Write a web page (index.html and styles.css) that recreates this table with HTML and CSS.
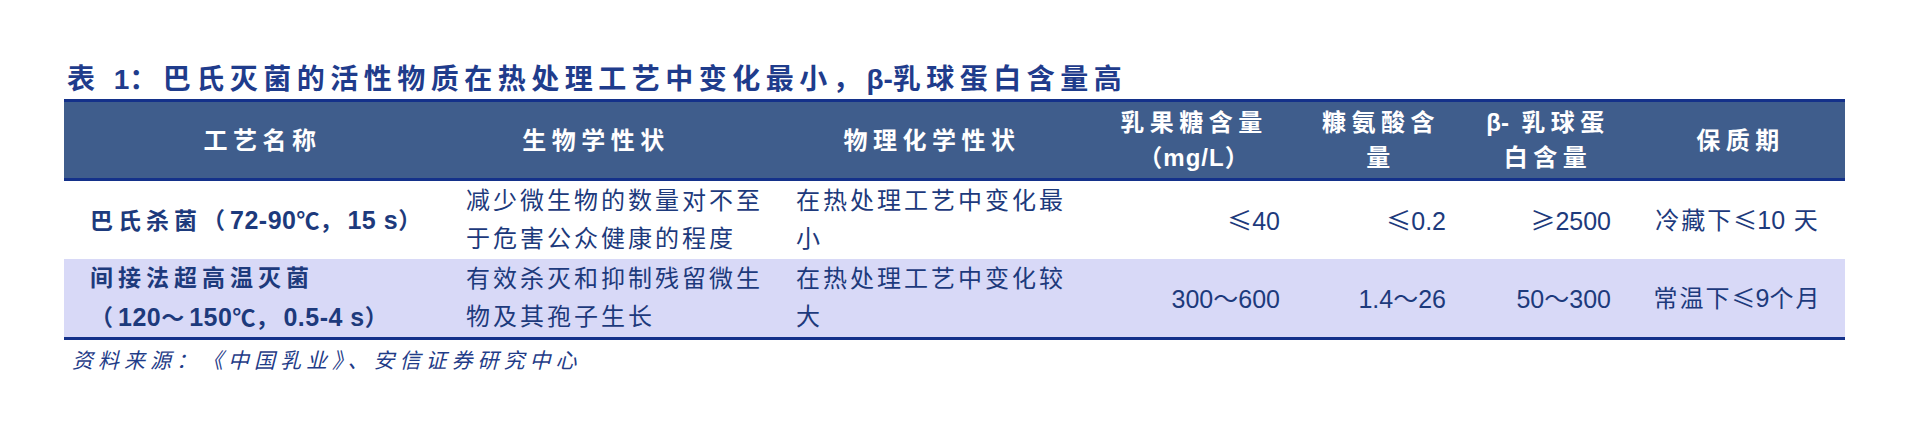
FILE: index.html
```html
<!DOCTYPE html>
<html lang="zh-CN">
<head>
<meta charset="utf-8">
<title>表1</title>
<link rel="stylesheet" href="styles.css">
</head>
<body>
<div class="page">
  <h1 class="title">表 <span class="n">1</span>：巴氏灭菌的活性物质在热处理工艺中变化最小，<span class="n">β-</span>乳球蛋白含量高</h1>
  <table class="data">
    <colgroup>
      <col class="c1"><col class="c2"><col class="c3"><col class="c4"><col class="c5"><col class="c6"><col class="c7">
    </colgroup>
    <thead>
      <tr>
        <th class="h1">工艺名称</th>
        <th class="h2">生物学性状</th>
        <th class="h3">物理化学性状</th>
        <th class="h4">乳果糖含量<br><span class="unit">（mg/L）</span></th>
        <th class="h5">糠氨酸含<br>量</th>
        <th class="h6"><span class="n">β-</span> 乳球蛋<br>白含量</th>
        <th class="h7">保质期</th>
      </tr>
    </thead>
    <tbody>
      <tr class="r1">
        <td class="name">巴氏杀菌（<span class="n">72-90</span><span class="sym">℃</span>，<span class="n">15 s</span>）</td>
        <td class="text">减少微生物的数量对不至<br>于危害公众健康的程度</td>
        <td class="text">在热处理工艺中变化最<br>小</td>
        <td class="num p4"><span class="sym">≤</span>40</td>
        <td class="num p5"><span class="sym">≤</span>0.2</td>
        <td class="num p6"><span class="sym">≥</span>2500</td>
        <td class="life">冷藏下<span class="sym">≤</span><span class="n">10</span> 天</td>
      </tr>
      <tr class="r2">
        <td class="name">间接法超高温灭菌<br>（<span class="n">120</span>～<span class="n">150</span><span class="sym">℃</span>，<span class="n">0.5-4 s</span>）</td>
        <td class="text">有效杀灭和抑制残留微生<br>物及其孢子生长</td>
        <td class="text">在热处理工艺中变化较<br>大</td>
        <td class="num p4">300<span class="sym">～</span>600</td>
        <td class="num p5">1.4<span class="sym">～</span>26</td>
        <td class="num p6">50<span class="sym">～</span>300</td>
        <td class="life">常温下<span class="sym">≤</span><span class="n">9</span>个月</td>
      </tr>
    </tbody>
  </table>
  <p class="source">资料来源：《中国乳业》、安信证券研究中心</p>
</div>
</body>
</html>
```
FILE: styles.css
```css
html, body {
  margin: 0;
  padding: 0;
  background: #ffffff;
}

body {
  font-family: "Liberation Sans", "Noto Sans CJK SC", sans-serif;
  color: #1d3a7c;
}

.page {
  padding: 61px 0 0 64px;
}

.title {
  margin: 0 0 1px 3px;
  font-size: 28px;
  line-height: 37px;
  font-weight: bold;
  letter-spacing: 5.5px;
  color: #1f3c8c;
  white-space: nowrap;
}

.n {
  font-family: "Liberation Sans", sans-serif;
  letter-spacing: 0;
}

.sym {
  font-family: "Noto Sans CJK SC", sans-serif;
  letter-spacing: 0;
}

.data {
  width: 1781px;
  table-layout: fixed;
  border-collapse: separate;
  border-spacing: 0;
}

.c1 { width: 391px; }
.c2 { width: 330px; }
.c3 { width: 315px; }
.c4 { width: 190px; }
.c5 { width: 170px; }
.c6 { width: 170px; }
.c7 { width: 215px; }

.data th {
  height: 76px;
  padding: 0 0 0 6px;
  background: #3f5d8c;
  color: #ffffff;
  font-size: 24px;
  line-height: 35px;
  font-weight: bold;
  letter-spacing: 5.5px;
  text-align: center;
  vertical-align: middle;
  border-top: 3px solid #14318a;
  border-bottom: 3px solid #14318a;
}

.data th .unit {
  letter-spacing: 1px;
}

.data th.h2 { padding-right: 54px; }
.data th.h3 { padding-right: 27px; }
.data th.h4 { padding-right: 8px; }
.data th.h5 { padding-left: 12px; }

.data td {
  height: 78px;
  padding: 0;
  font-size: 24px;
  line-height: 38px;
  vertical-align: middle;
  color: #1d3a7c;
}

.r2 td {
  background: #d8d9f7;
  border-bottom: 3px solid #14318a;
}

.data td.name {
  padding-left: 26px;
  font-weight: bold;
  font-size: 23px;
  letter-spacing: 5px;
  white-space: nowrap;
}

.data td.name .n {
  font-size: 25px;
  letter-spacing: 0.5px;
}

.data td.text {
  padding-left: 11px;
  letter-spacing: 3px;
  white-space: nowrap;
}

.data td.num {
  text-align: right;
  font-size: 25px;
}

.data td.p4 { padding-right: 10px; }
.data td.p5 { padding-right: 14px; }
.data td.p6 { padding-right: 19px; }

.data td.life {
  text-align: center;
  letter-spacing: 2px;
  white-space: nowrap;
}

.data td.life .n {
  font-size: 25px;
}

.source {
  margin: 6px 0 0 8px;
  font-size: 21px;
  line-height: 30px;
  font-style: italic;
  letter-spacing: 5px;
  color: #1f3c88;
}
```
